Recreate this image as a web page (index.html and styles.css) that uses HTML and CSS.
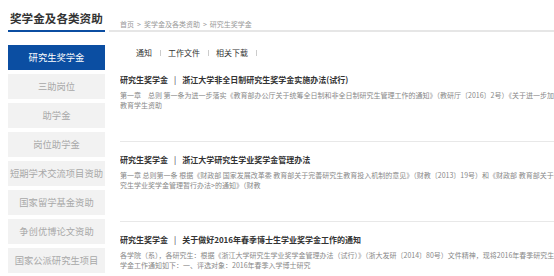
FILE: index.html
```html
<!DOCTYPE html>
<html lang="zh-CN">
<head>
<meta charset="utf-8">
<title>研究生奖学金</title>
<link rel="stylesheet" href="styles.css">
</head>
<body>
<div class="page">
  <header class="top">
    <h1 class="section-title">奖学金及各类资助</h1>
    <div class="crumbs">首页<span class="gt">&gt;</span>奖学金及各类资助<span class="gt">&gt;</span>研究生奖学金</div>
  </header>
  <div class="body">
    <nav class="side">
      <a class="side-item active">研究生奖学金</a>
      <a class="side-item">三助岗位</a>
      <a class="side-item">助学金</a>
      <a class="side-item">岗位助学金</a>
      <a class="side-item">短期学术交流项目资助</a>
      <a class="side-item">国家留学基金资助</a>
      <a class="side-item">争创优博论文资助</a>
      <a class="side-item">国家公派研究生项目</a>
    </nav>
    <main class="main">
      <div class="tabs">
        <a class="tab">通知</a>
        <a class="tab">工作文件</a>
        <a class="tab">相关下载</a>
      </div>
      <article class="post">
        <h2 class="post-title">研究生奖学金<span class="bar">|</span>浙江大学非全日制研究生奖学金实施办法(试行)</h2>
        <p class="post-text"><span class="line">第一章　总则 第一条为进一步落实《教育部办公厅关于统筹全日制和非全日制研究生管理工作的通知》（教研厅〔2016〕2号）《关于进一步加强研究生教育</span><span class="line">教育学生资助</span></p>
      </article>
      <article class="post">
        <h2 class="post-title">研究生奖学金<span class="bar">|</span>浙江大学研究生学业奖学金管理办法</h2>
        <p class="post-text"><span class="line">第一章 总则第一条 根据《财政部 国家发展改革委 教育部关于完善研究生教育投入机制的意见》（财教〔2013〕19号）和《财政部 教育部关于印发&lt;研</span><span class="line">究生学业奖学金管理暂行办法&gt;的通知》（财教</span></p>
      </article>
      <article class="post">
        <h2 class="post-title">研究生奖学金<span class="bar">|</span>关于做好2016年春季博士生学业奖学金工作的通知</h2>
        <p class="post-text"><span class="line">各学院（系），各研究生：根据《浙江大学研究生学业奖学金管理办法（试行）》（浙大发研〔2014〕80号）文件精神，现将2016年春季研究生学业奖</span><span class="line">学金工作通知如下：一、评选对象：2016年春季入学博士研究</span></p>
      </article>
    </main>
  </div>
</div>
</body>
</html>
```

FILE: styles.css
```css
html, body {
  margin: 0;
  padding: 0;
  background: #fff;
  overflow: hidden;
}
body {
  width: 554px;
  height: 276px;
  font-family: "Noto Sans CJK SC", "Noto Sans", sans-serif;
  color: #333;
}
.page {
  padding-left: 8px;
}
.top {
  display: flex;
  align-items: flex-end;
}
.section-title {
  width: 97px;
  margin: 0;
  padding: 11px 0 4px 2px;
  box-sizing: border-box;
  font-size: 11.6px;
  line-height: 15px;
  font-weight: bold;
  color: #333;
  white-space: nowrap;
  border-bottom: 2px solid #0b4ea2;
}
.crumbs {
  flex: 1;
  margin-left: 4px;
  padding: 19px 0 1px 11px;
  font-size: 7px;
  line-height: 10px;
  color: #999;
  white-space: nowrap;
  border-bottom: 2px solid #e6e6e6;
}
.gt {
  margin: 0 3px;
}
.body {
  display: flex;
}
.side {
  width: 97px;
  flex: none;
  margin-top: 13px;
  display: flex;
  flex-direction: column;
  gap: 4px;
}
.side-item {
  display: block;
  height: 25px;
  line-height: 25px;
  text-align: center;
  font-size: 9.3px;
  color: #a8a8a8;
  background: #f2f2f2;
  white-space: nowrap;
  overflow: hidden;
}
.side-item.active {
  background: #0b4ea2;
  color: #fff;
}
.main {
  flex: 1;
  min-width: 0;
  margin-left: 15px;
  overflow: hidden;
}
.tabs {
  display: flex;
  padding: 15px 0 2px 16px;
  line-height: 12px;
  font-size: 8px;
  color: #333;
}
.tab {
  display: flex;
  align-items: center;
  white-space: nowrap;
}
.tab::after {
  content: "";
  display: inline-block;
  width: 1px;
  height: 6px;
  background: #ccc;
  margin: 0 7px 0 8px;
}
.post {
  height: 80px;
  box-sizing: border-box;
  padding-top: 12px;
  border-top: 1px solid #e8e8e8;
}
.post:first-of-type {
  border-top-color: transparent;
}
.post-title {
  margin: 0;
  font-size: 8px;
  line-height: 12px;
  font-weight: bold;
  color: #333;
  white-space: nowrap;
}
.bar {
  margin: 0 6px;
  font-weight: normal;
}
.post-text {
  margin: 4px 0 0;
  font-size: 7px;
  line-height: 10px;
  color: #888;
}
.line {
  display: block;
  white-space: nowrap;
}
```
